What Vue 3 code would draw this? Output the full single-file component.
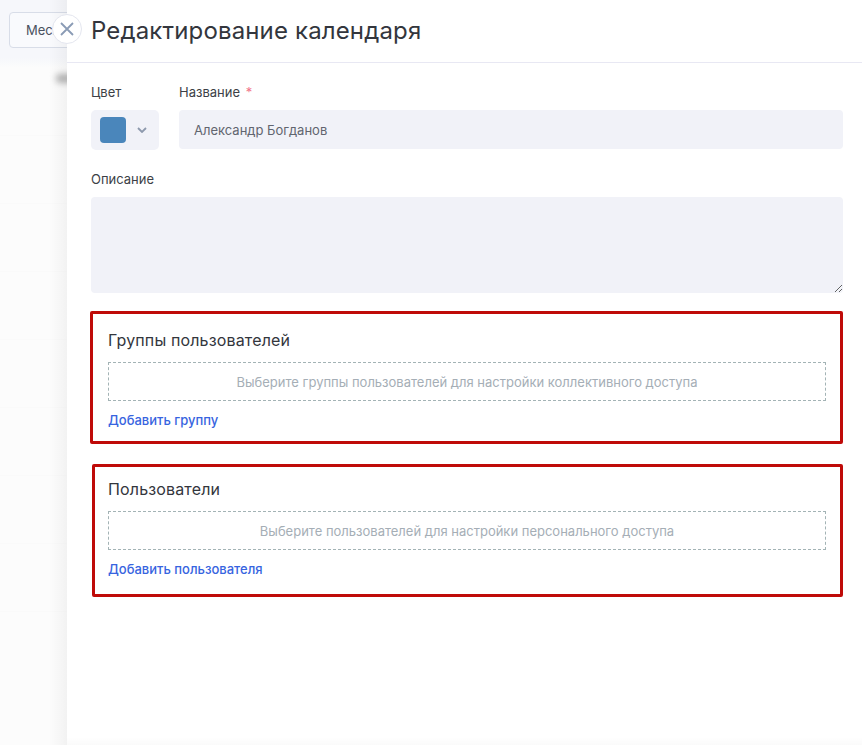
<template>
  <div class="page">
    <!-- задний план -->
    <aside class="backdrop">
      <div class="top-strip">
        <button class="month-btn">Месяц</button>
      </div>
      <div class="blur-spot"></div>
      <div v-for="n in 8" :key="n" class="bg-row"></div>
    </aside>

    <main class="panel">
      <button class="close-btn" aria-label="Закрыть">
        <svg width="16" height="16" viewBox="0 0 16 16">
          <path d="M2 2 L14 14 M14 2 L2 14" stroke="#8a9bb5" stroke-width="1.8" fill="none" />
        </svg>
      </button>

      <header class="panel-head">
        <h1>Редактирование календаря</h1>
      </header>

      <div class="form">
        <div class="row">
          <div class="field color-field">
            <label>Цвет</label>
            <div class="color-select">
              <span class="swatch"></span>
              <svg width="10" height="6" viewBox="0 0 10 6">
                <path d="M1 1 L5 5 L9 1" stroke="#8d99ad" stroke-width="1.8" fill="none" />
              </svg>
            </div>
          </div>
          <div class="field name-field">
            <label>Название <span class="req">*</span></label>
            <input class="input" value="Александр Богданов" />
          </div>
        </div>

        <div class="field desc-field">
          <label>Описание</label>
          <textarea class="textarea"></textarea>
        </div>

        <section v-for="s in sections" :key="s.title" class="access" :class="s.cls">
          <div class="mark"></div>
          <h2>{{ s.title }}</h2>
          <div class="empty">{{ s.hint }}</div>
          <a class="add-link" href="#">{{ s.action }}</a>
        </section>
      </div>

      <div class="bottom-fade"></div>
    </main>
  </div>
</template>

<script setup>
const sections = [
  {
    cls: 'groups',
    title: 'Группы пользователей',
    hint: 'Выберите группы пользователей для настройки коллективного доступа',
    action: 'Добавить группу'
  },
  {
    cls: 'users',
    title: 'Пользователи',
    hint: 'Выберите пользователей для настройки персонального доступа',
    action: 'Добавить пользователя'
  }
]
</script>

<style>
body {
  margin: 0;
  overflow: hidden;
}
</style>

<style scoped>
.page {
  display: flex;
  width: 862px;
  height: 745px;
  overflow: hidden;
  font-family: Inter, "Liberation Sans", sans-serif;
  background: #fff;
}

.backdrop {
  position: relative;
  width: 67px;
  flex-shrink: 0;
  background: #fcfcfc;
  overflow: hidden;
}

.backdrop::after {
  content: '';
  position: absolute;
  top: 0;
  right: 0;
  bottom: 0;
  width: 18px;
  background: linear-gradient(to right, rgba(0, 0, 0, 0), rgba(0, 0, 0, 0.04));
}

.top-strip {
  height: 68px;
  padding: 12px 0 0 9px;
  box-sizing: border-box;
  background: linear-gradient(to bottom, #f6f7fb 85%, #fcfcfc);
}

.month-btn {
  display: block;
  width: 90px;
  height: 36px;
  padding: 0 0 0 16px;
  text-align: left;
  border: 1px solid #d8dde8;
  border-radius: 4px;
  background: #f9fafd;
  color: #4a5160;
  font: 13px Inter, "Liberation Sans", sans-serif;
}

.blur-spot {
  position: absolute;
  top: 74px;
  left: 56px;
  width: 20px;
  height: 9px;
  border-radius: 4px;
  background: #b4b4b4;
  filter: blur(3px);
}

.bg-row {
  height: 67px;
  border-bottom: 1px solid #fafafa;
}

.panel {
  position: relative;
  flex: 1;
  background: #fff;
}

.close-btn {
  position: absolute;
  top: 14px;
  left: -15px;
  z-index: 2;
  display: flex;
  align-items: center;
  justify-content: center;
  width: 30px;
  height: 30px;
  padding: 0;
  border: 1px solid #e4e6ef;
  border-radius: 50%;
  background: #fff;
}

.panel-head {
  display: flex;
  align-items: center;
  height: 60px;
  padding: 0 0 2px 24px;
  border-bottom: 1px solid #e8e8f3;
}

.panel-head h1 {
  margin: 0;
  font-size: 24px;
  font-weight: 400;
  letter-spacing: 0.15px;
  color: #33363d;
}

.form {
  padding: 21px 19px 0 24px;
}

.row {
  display: flex;
  gap: 20px;
}

.field label {
  display: block;
  height: 17px;
  margin-bottom: 9px;
  font-size: 13px;
  line-height: 17px;
  color: #3c3f46;
}

.color-field {
  width: 68px;
}

.name-field {
  flex: 1;
}

.req {
  margin-left: 2px;
  color: #f1758a;
}

.color-select {
  display: flex;
  align-items: center;
  gap: 11px;
  height: 40px;
  padding-left: 9px;
  box-sizing: border-box;
  border-radius: 5px;
  background: #f1f2f8;
}

.swatch {
  width: 26px;
  height: 26px;
  border-radius: 4px;
  background: #4a86bb;
}

.input {
  display: block;
  width: 100%;
  height: 39px;
  padding: 0 15px;
  box-sizing: border-box;
  border: 0;
  border-radius: 4px;
  outline: 0;
  background: #f1f2f8;
  color: #61656f;
  font: 13px Inter, "Liberation Sans", sans-serif;
}

.desc-field {
  margin-top: 21px;
}

.textarea {
  display: block;
  width: 100%;
  height: 96px;
  box-sizing: border-box;
  border: 0;
  border-radius: 4px;
  outline: 0;
  background: #f1f2f8;
}

.access {
  position: relative;
  height: 112px;
  padding-left: 17px;
  padding-right: 17px;
}

.groups {
  margin-top: 38px;
}

.users {
  margin-top: 37px;
}

.access h2 {
  margin: 0 0 13px;
  font-size: 16px;
  font-weight: 400;
  letter-spacing: 0.15px;
  line-height: 18px;
  color: #33363d;
}

.empty {
  display: flex;
  align-items: center;
  justify-content: center;
  height: 39px;
  box-sizing: border-box;
  border: 1px dashed #a3b3b5;
  color: #a5aeb6;
  font-size: 13px;
}

.add-link {
  display: block;
  margin-top: 11px;
  font-size: 13px;
  font-weight: 500;
  line-height: 17px;
  color: #3764e0;
  text-decoration: none;
}

/* красная рамка поверх скриншота */
.mark {
  position: absolute;
  border: 3px solid #bf0a08;
  border-radius: 2px;
  pointer-events: none;
}

.groups .mark {
  left: -1px;
  right: 0;
  top: -20px;
  bottom: -1px;
}

.users .mark {
  left: 1px;
  right: 0;
  top: -16px;
  bottom: -5px;
}

.bottom-fade {
  position: absolute;
  left: 0;
  right: 0;
  bottom: 0;
  height: 8px;
  background: linear-gradient(to bottom, rgba(0, 0, 0, 0), rgba(0, 0, 0, 0.02));
}
</style>
